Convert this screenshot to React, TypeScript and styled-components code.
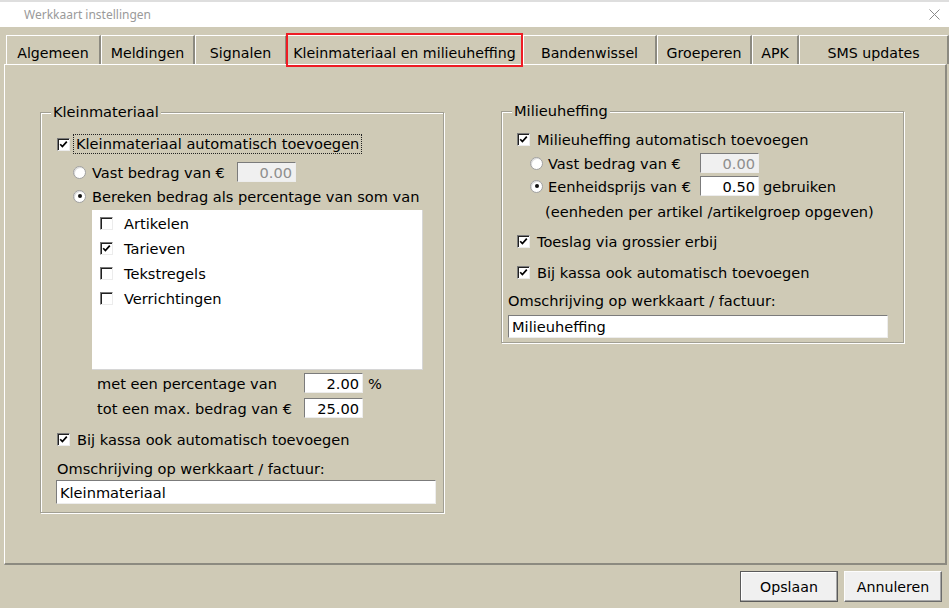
import React from "react";
import styled, { createGlobalStyle, css } from "styled-components";

const BG = "#cfcab6";

const GlobalStyle = createGlobalStyle`
  html, body { margin: 0; padding: 0; }
  body {
    width: 949px;
    height: 608px;
    overflow: hidden;
    background: ${BG};
    font-family: "DejaVu Sans", Verdana, sans-serif;
    color: #000;
  }
  * { box-sizing: border-box; }
`;

const Window = styled.div`
  width: 949px;
  height: 608px;
  display: flex;
  flex-direction: column;
  background: ${BG};
`;

const TopStrip = styled.div`
  height: 2px;
  background: #dedede;
`;

const TitleBar = styled.div`
  height: 25px;
  background: #fff;
  display: flex;
  align-items: center;
  justify-content: space-between;
  padding: 0 9px 0 24px;
`;

const TitleText = styled.span`
  font-family: "Noto Sans", "Open Sans", sans-serif;
  font-size: 12px;
  color: #9a9a9a;
`;

const Body = styled.div`
  flex: 1;
  display: flex;
  flex-direction: column;
  padding-top: 8px;
`;

const TabBar = styled.div`
  display: flex;
  height: 29px;
  padding-left: 6px;
  position: relative;
  z-index: 2;
`;

const Tab = styled.div<{ $w: number; $active?: boolean }>`
  position: relative;
  width: ${(p) => p.$w}px;
  height: 29px;
  flex: none;
  border-top: 1px solid #fff;
  border-left: 1px solid #fff;
  border-right: 2px solid #8c8a80;
  text-align: center;
  padding-top: 7px;
  font-size: 14.2px;
  line-height: 20px;
  white-space: nowrap;
  ${(p) =>
    p.$active &&
    css`
      border-right-color: transparent;
      &::after {
        content: "";
        position: absolute;
        left: -2px;
        right: -2px;
        top: -3px;
        bottom: -3px;
        border: 2px solid #ee1c24;
      }
    `}
`;

const Panel = styled.div`
  margin-left: 4px;
  width: 943px;
  height: 501px;
  border-top: 1px solid #fff;
  border-left: 1px solid #fff;
  border-right: 2px solid #8c8a80;
  border-bottom: 2px solid #8c8a80;
  display: flex;
  align-items: flex-start;
  padding: 46px 0 0 35px;
  gap: 57px;
`;

const GroupBox = styled.section<{ $w: number; $pb: number; $mt?: number }>`
  width: ${(p) => p.$w}px;
  margin-top: ${(p) => p.$mt ?? 0}px;
  padding-bottom: ${(p) => p.$pb}px;
  border: 1px solid #a19f93;
  box-shadow: inset 1px 1px 0 #fff, 1px 1px 0 #fff;
  display: flex;
  flex-direction: column;
`;

const GroupTitle = styled.div`
  align-self: flex-start;
  margin: -9px 0 0 10px;
  padding: 0 2px;
  font-size: 14.6px;
  line-height: 16px;
  height: 16px;
  background: ${BG};
`;

const Row = styled.div<{ $mt: number; $ml: number }>`
  display: flex;
  align-items: center;
  height: 20px;
  margin-top: ${(p) => p.$mt}px;
  margin-left: ${(p) => p.$ml}px;
  font-size: 14.6px;
  white-space: nowrap;
`;

const Label = styled.span<{ $w?: number; $gap?: number }>`
  display: inline-block;
  ${(p) => p.$w !== undefined && css`width: ${p.$w}px;`}
  margin-left: ${(p) => p.$gap ?? 0}px;
  flex: none;
`;

const FocusLabel = styled.span`
  margin-left: 3px;
  padding: 0 3px;
  height: 20px;
  line-height: 19px;
  outline: 1px dotted #222;
  outline-offset: -1px;
`;

const BoxMark = styled.span`
  width: 13px;
  height: 13px;
  flex: none;
  display: inline-flex;
  align-items: center;
  justify-content: center;
  background: #fff;
  border-top: 1px solid #7a7a7a;
  border-left: 1px solid #7a7a7a;
  border-bottom: 1px solid #ececec;
  border-right: 1px solid #ececec;
  box-shadow: inset 1px 1px 0 #202020;
`;

const RadioMark = styled.span`
  width: 13px;
  height: 13px;
  flex: none;
  border-radius: 50%;
  background: #fff;
  border: 1px solid #a0a0a0;
  box-shadow: inset 1px 1px 0 #dcdcdc;
  display: inline-flex;
  align-items: center;
  justify-content: center;
`;

const Dot = styled.span`
  width: 4px;
  height: 4px;
  border-radius: 50%;
  background: #111;
`;

const Field = styled.input<{ $w: number; $h: number; $align?: "left" | "right"; $gap?: number }>`
  width: ${(p) => p.$w}px;
  height: ${(p) => p.$h}px;
  margin: 0 0 0 ${(p) => p.$gap ?? 0}px;
  flex: none;
  border-top: 1px solid #7b7b7b;
  border-left: 1px solid #7b7b7b;
  border-bottom: 1px solid #ededed;
  border-right: 1px solid #ededed;
  background: #fff;
  font-family: "DejaVu Sans", Verdana, sans-serif;
  font-size: 14.6px;
  color: #000;
  text-align: ${(p) => p.$align ?? "right"};
  padding: 1px 3px 0 3px;
  outline: none;
  &:disabled {
    background: #f0f0f0;
    color: #8e8e8e;
  }
`;

const ListBox = styled.div`
  margin: 4px 0 0 51px;
  width: 331px;
  height: 160px;
  background: #fff;
  border-right: 1px solid #d6d6d6;
  border-bottom: 1px solid #d6d6d6;
  padding: 1px 0 0 8px;
  display: flex;
  flex-direction: column;
`;

const ListItem = styled.div`
  height: 25px;
  display: flex;
  align-items: center;
  font-size: 14.6px;
`;

const Footer = styled.div`
  display: flex;
  justify-content: flex-end;
  gap: 6px;
  padding: 6px 7px 0 0;
`;

const Button = styled.button<{ $default?: boolean }>`
  width: 98px;
  height: 31px;
  background: #f0f0f0;
  font-family: "DejaVu Sans", Verdana, sans-serif;
  font-size: 14.2px;
  color: #000;
  padding: 0;
  border-top: 1px solid #fdfdfd;
  border-left: 1px solid #fdfdfd;
  border-right: 1px solid #6c6c6c;
  border-bottom: 1px solid #6c6c6c;
  box-shadow: inset -1px -1px 0 #a8a8a8;
  ${(p) =>
    p.$default &&
    css`
      outline: 1px solid #5a5a5a;
      outline-offset: -1px;
      box-shadow: inset -1px -1px 0 #a8a8a8, inset 1px 1px 0 #fff;
    `}
`;

const Check = ({ checked }: { checked?: boolean }) => (
  <BoxMark>
    {checked && (
      <svg width="9" height="9" viewBox="0 0 9 9">
        <path d="M1.2 4.2 L3.4 6.6 L7.8 1.6" fill="none" stroke="#000" strokeWidth="1.7" />
      </svg>
    )}
  </BoxMark>
);

const Radio = ({ checked }: { checked?: boolean }) => <RadioMark>{checked && <Dot />}</RadioMark>;

const tabs: { label: string; w: number; active?: boolean }[] = [
  { label: "Algemeen", w: 95 },
  { label: "Meldingen", w: 94 },
  { label: "Signalen", w: 92 },
  { label: "Kleinmateriaal en milieuheffing", w: 236, active: true },
  { label: "Bandenwissel", w: 134 },
  { label: "Groeperen", w: 95 },
  { label: "APK", w: 47 },
  { label: "SMS updates", w: 150 },
];

const listItems: { name: string; checked: boolean }[] = [
  { name: "Artikelen", checked: false },
  { name: "Tarieven", checked: true },
  { name: "Tekstregels", checked: false },
  { name: "Verrichtingen", checked: false },
];

export default function App() {
  return (
    <>
      <GlobalStyle />
      <Window>
        <TopStrip />
        <TitleBar>
          <TitleText>Werkkaart instellingen</TitleText>
          <svg width="11" height="11" viewBox="0 0 11 11">
            <path d="M0.5 0.5 L10.5 10.5 M10.5 0.5 L0.5 10.5" stroke="#8a8a8a" strokeWidth="1" />
          </svg>
        </TitleBar>
        <Body>
          <TabBar>
            {tabs.map((t) => (
              <Tab key={t.label} $w={t.w} $active={t.active}>
                {t.label}
              </Tab>
            ))}
          </TabBar>
          <Panel>
            <GroupBox $w={404} $pb={10} $mt={1}>
              <GroupTitle>Kleinmateriaal</GroupTitle>
              <Row $mt={14} $ml={16}>
                <Check checked />
                <FocusLabel>Kleinmateriaal automatisch toevoegen</FocusLabel>
              </Row>
              <Row $mt={8} $ml={32}>
                <Radio />
                <Label $gap={6} $w={145}>Vast bedrag van €</Label>
                <Field $w={59} $h={20} disabled defaultValue="0.00" />
              </Row>
              <Row $mt={4} $ml={32}>
                <Radio checked />
                <Label $gap={6}>Bereken bedrag als percentage van som van</Label>
              </Row>
              <ListBox>
                {listItems.map((it) => (
                  <ListItem key={it.name}>
                    <Check checked={it.checked} />
                    <Label $gap={11}>{it.name}</Label>
                  </ListItem>
                ))}
              </ListBox>
              <Row $mt={3} $ml={56}>
                <Label $w={207}>met een percentage van</Label>
                <Field $w={59} $h={20} defaultValue="2.00" readOnly />
                <Label $gap={5}>%</Label>
              </Row>
              <Row $mt={5} $ml={56}>
                <Label $w={207}>tot een max. bedrag van €</Label>
                <Field $w={59} $h={20} defaultValue="25.00" readOnly />
              </Row>
              <Row $mt={11} $ml={16}>
                <Check checked />
                <Label $gap={7}>Bij kassa ook automatisch toevoegen</Label>
              </Row>
              <Row $mt={9} $ml={16}>
                <Label>Omschrijving op werkkaart / factuur:</Label>
              </Row>
              <Row $mt={4} $ml={15}>
                <Field $w={380} $h={24} $align="left" defaultValue="Kleinmateriaal" readOnly />
              </Row>
            </GroupBox>
            <GroupBox $w={403} $pb={6}>
              <GroupTitle>Milieuheffing</GroupTitle>
              <Row $mt={10} $ml={15}>
                <Check checked />
                <Label $gap={7}>Milieuheffing automatisch toevoegen</Label>
              </Row>
              <Row $mt={4} $ml={28}>
                <Radio />
                <Label $gap={5} $w={152}>Vast bedrag van €</Label>
                <Field $w={59} $h={20} disabled defaultValue="0.00" />
              </Row>
              <Row $mt={3} $ml={28}>
                <Radio checked />
                <Label $gap={5} $w={152}>Eenheidsprijs van €</Label>
                <Field $w={59} $h={20} defaultValue="0.50" readOnly />
                <Label $gap={4}>gebruiken</Label>
              </Row>
              <Row $mt={5} $ml={43}>
                <Label>(eenheden per artikel /artikelgroep opgeven)</Label>
              </Row>
              <Row $mt={10} $ml={15}>
                <Check checked />
                <Label $gap={7}>Toeslag via grossier erbij</Label>
              </Row>
              <Row $mt={11} $ml={15}>
                <Check checked />
                <Label $gap={7}>Bij kassa ook automatisch toevoegen</Label>
              </Row>
              <Row $mt={8} $ml={6}>
                <Label>Omschrijving op werkkaart / factuur:</Label>
              </Row>
              <Row $mt={6} $ml={6}>
                <Field $w={380} $h={23} $align="left" defaultValue="Milieuheffing" readOnly />
              </Row>
            </GroupBox>
          </Panel>
          <Footer>
            <Button $default>Opslaan</Button>
            <Button>Annuleren</Button>
          </Footer>
        </Body>
      </Window>
    </>
  );
}
